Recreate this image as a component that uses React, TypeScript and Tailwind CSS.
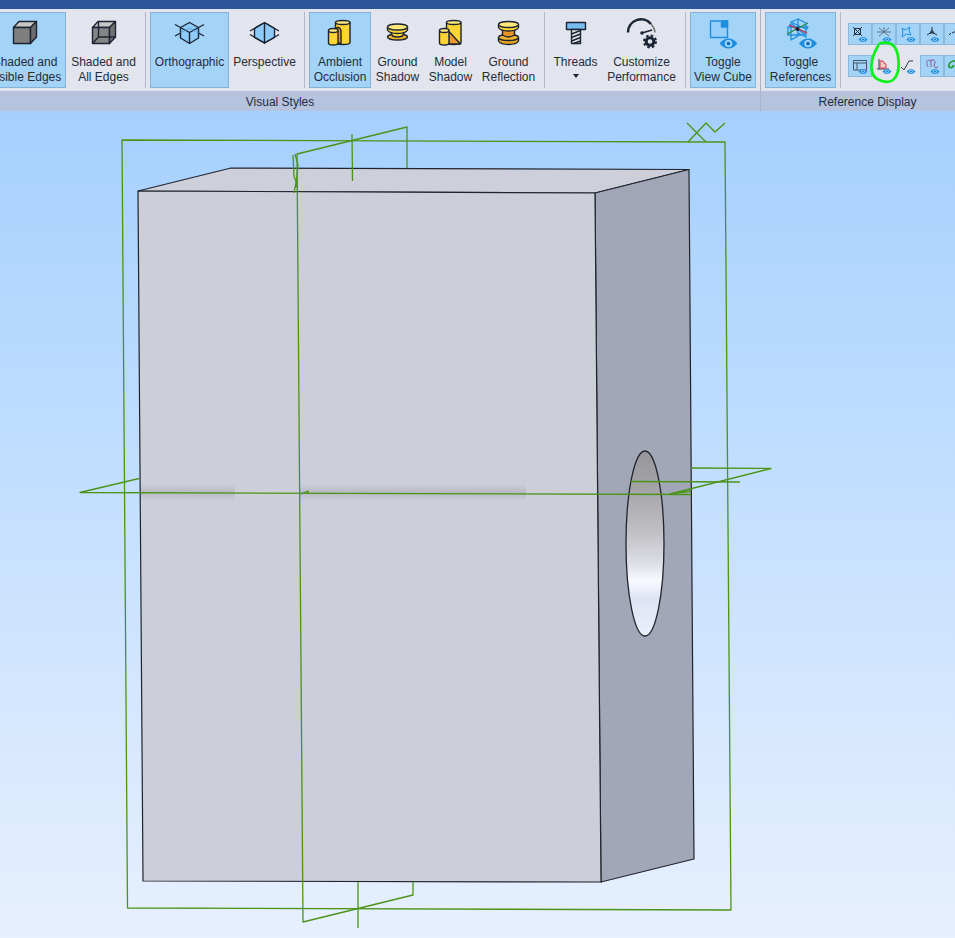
import { ReactNode } from "react";
import clsx from "clsx";

const INK = "#1b2433";
const BLUE = "#1e8fe0";
const GREEN = "#4b9418";

function Icon({ children }: { children: ReactNode }) {
  return (
    <svg viewBox="0 0 36 32" className="h-8 w-9 shrink-0" fill="none" stroke={INK} strokeWidth="1.4" strokeLinejoin="round" aria-hidden="true">
      {children}
    </svg>
  );
}

function Eye({ x, y, s = 1 }: { x: number; y: number; s?: number }) {
  return (
    <g transform={`translate(${x} ${y}) scale(${s})`} stroke="none">
      <path d="M-9 0Q-5 -5 0 -5T9 0Q5 5 0 5T-9 0Z" fill={BLUE} />
      <circle r="3.6" fill="#b5defb" />
      <circle r="2" fill="#1574c4" />
    </g>
  );
}

const ShadedIcon = () => (
  <Icon>
    <path d="M6.5 10.5L12 4.5H29.5L23.5 10.5Z" fill="#c8c8c8" />
    <path d="M6.5 10.5H23.5V26.5H6.5Z" fill="#7f7f7f" />
    <path d="M23.5 10.5L29.5 4.5V20L23.5 26.5Z" fill="#6c6c6c" />
  </Icon>
);

const AllEdgesIcon = () => (
  <Icon>
    <path d="M6.5 10.5L12 4.5H29.5L23.5 10.5Z" fill="#c8c8c8" />
    <path d="M6.5 10.5H23.5V26.5H6.5Z" fill="#858585" />
    <path d="M23.5 10.5L29.5 4.5V20L23.5 26.5Z" fill="#707070" />
    <path d="M12.5 4.5V20H29.5M12.5 20L6.5 26.5" />
  </Icon>
);

const OrthoIcon = () => (
  <Icon>
    <path d="M17.5 5.5L26.5 10.5V21L17.5 26.5L8.500 21V10.5Z" fill="#8ccbfa" />
    <path d="M3 7.5L17.5 15.5L32 7.5M17.5 15.5V26.5M8.500 16L3 19M26.5 16L32 19" />
    <path d="M8.500 16L17.5 11L26.5 16" stroke="#5d9fd0" strokeWidth="0.8" />
  </Icon>
);

const PerspectiveIcon = () => (
  <Icon>
    <path d="M17.5 5.5L27.5 11.5V20.5L17.5 26L7.5 20.5V11.5Z" fill="#8ccbfa" />
    <path d="M17.5 5V27M17.5 5.5L3 14M17.5 5.5L32 14M3 17.5L17.5 26M32 17.5L17.5 26" />
  </Icon>
);

function Cylinder({ x, y, w, h }: { x: number; y: number; w: number; h: number }) {
  const r = w / 2;
  return (
    <g>
      <path d={`M${x} ${y}V${y + h}A${r} 2 0 0 0 ${x + w} ${y + h}V${y}`} fill="#fcd535" />
      <ellipse cx={x + r} cy={y} rx={r} ry="2" fill="#ffe77a" />
    </g>
  );
}

const AmbientIcon = () => (
  <Icon>
    <Cylinder x={13.5} y={5.5} w={14.5} h={20} />
    <path d="M14 11C17.500 9.500 19 12 19 14V26.500L14 26Z" fill="#e89b1c" />
    <Cylinder x={6.5} y={13.5} w={9.5} h={12.5} />
  </Icon>
);

const GroundShadowIcon = () => (
  <Icon>
    <ellipse cx="17.5" cy="20" rx="10" ry="3" fill="#f0b429" />
    <path d="M10.5 14L12.5 19Q17.5 21 22.5 19L24.5 14Z" fill="#fcd535" />
    <path d="M7.5 10V13Q9.5 16.5 17.5 16.5T27.5 13V10" fill="#fcd535" />
    <ellipse cx="17.5" cy="10" rx="10" ry="3" fill="#ffe77a" />
  </Icon>
);

const ModelShadowIcon = () => (
  <Icon>
    <Cylinder x={13.5} y={5.5} w={14.5} h={20} />
    <path d="M15.5 14L27.5 27H15.5Z" fill="#f0962a" />
    <Cylinder x={6.5} y={13.5} w={9.5} h={12.5} />
  </Icon>
);

const ReflectionIcon = () => (
  <Icon>
    <path d="M7.5 20.5V24Q9.5 27.5 17.5 27.5T27.5 24V20.5" fill="#e9a51f" />
    <ellipse cx="17.5" cy="20.5" rx="10" ry="3" fill="#f3b62b" />
    <path d="M11.5 12V18Q17.5 22 23.5 18V12Z" fill="#e79422" />
    <path d="M7.5 7.5V10.5Q9.5 14 17.5 14T27.5 10.5V7.5" fill="#fcd535" />
    <ellipse cx="17.5" cy="7.5" rx="10" ry="3" fill="#ffe77a" />
  </Icon>
);

const ThreadsIcon = () => (
  <Icon>
    <path d="M8.5 5.500H27.5V12.5H8.5Z" fill="#79bdf0" />
    <path d="M13.5 12.5H22.5V26.5H13.5Z" fill="#e6e6e6" />
    <path d="M13.5 17L22.5 13.5M13.5 20.5L22.5 17M13.5 24L22.5 20.5M15.5 26.5L22.5 24" />
  </Icon>
);

const PerformanceIcon = () => (
  <Icon>
    <path d="M4 15.5A13 13 0 0 1 27 7" strokeWidth="2.6" />
    <path d="M27 7Q30.5 10.500 31 15.5" strokeWidth="1.6" stroke="#777" />
    <path d="M18 16L28 13" strokeWidth="1.8" />
    <circle cx="18" cy="16" r="1.8" fill={INK} stroke="none" />
    <circle cx="26" cy="24.5" r="3.8" strokeWidth="3" />
    <circle cx="26" cy="24.5" r="6" strokeWidth="2" strokeDasharray="2.5 2.21" />
  </Icon>
);

const ViewCubeIcon = () => (
  <Icon>
    <path d="M5.5 4H22.5V20.5H5.5Z" fill="#98cffa" stroke={BLUE} />
    <path d="M16.5 4H22.5V10H16.5Z" fill={BLUE} stroke={BLUE} />
    <Eye x={23.5} y={26.5} />
  </Icon>
);

const ReferencesIcon = () => (
  <Icon>
    <g stroke={BLUE} strokeWidth="1.3">
      <path d="M8 5L15 2V19L8 23Z" />
      <path d="M15 2L23 6V20L15 16M5 10H25L20 18H5ZM9 7L22 18M8 5L23 12" />
    </g>
    <path d="M4 17L25 6" stroke="#2c8a3c" />
    <path d="M6 8L24 16" stroke="#a8465f" />
    <circle cx="14.5" cy="12" r="2" fill={INK} stroke="none" />
    <Eye x={25} y={26.5} />
  </Icon>
);

type RibbonButtonProps = {
  icon: ReactNode;
  lines: string[];
  width: string;
  active?: boolean;
  menu?: boolean;
};

function RibbonButton({ icon, lines, width, active, menu }: RibbonButtonProps) {
  return (
    <button
      type="button"
      aria-pressed={active}
      className={clsx(
        "flex h-[76px] shrink-0 flex-col items-center border pt-1 text-xs leading-[15px] whitespace-nowrap",
        width,
        active ? "border-[#83b4d8] bg-[#a3d4f8]" : "border-transparent hover:bg-[#d0e4f7]"
      )}
    >
      {icon}
      <span className="mt-[6px] flex flex-col items-center">
        {lines.map((line) => (
          <span key={line}>{line}</span>
        ))}
      </span>
      {menu && (
        <svg viewBox="0 0 8 5" className="mt-1 h-[5px] w-2" aria-hidden="true">
          <path d="M1 0H7L4 4Z" fill={INK} />
        </svg>
      )}
    </button>
  );
}

const Separator = () => <div className="mx-1 h-[76px] w-px shrink-0 bg-[#b3b8c8]" />;

const smallTools = [
  {
    name: "Points",
    active: true,
    art: <path d="M5 4L14 13M14 4L5 13M6.5 5.5H12.5V11.5H6.5Z" stroke="#2a3444" />,
  },
  {
    name: "Axes",
    active: true,
    art: <path d="M7 5L17 13M17 5L7 13M12 4V9M5 9H19" stroke="#506070" strokeWidth="0.8" />,
  },
  {
    name: "Planes",
    active: true,
    art: <path d="M6 5L9 7L14 4L13 8L15 12L10 11L6 14L7 9Z" stroke={BLUE} />,
  },
  {
    name: "Origin",
    active: true,
    art: <path d="M12 4V9L7 12M12 9L17 12M10 10L12 7L14 10Z" stroke="#223040" />,
  },
  {
    name: "Curves",
    active: true,
    art: <path d="M5 12L7 10M8 10L10 9L13 9" stroke="#223040" />,
  },
  {
    name: "Annotations",
    active: true,
    art: <path d="M5.5 5.5H18.5V15H5.5ZM5.5 8H18M9 8V15" stroke="#41566b" />,
  },
  {
    name: "Sketch dimensions",
    active: false,
    art: (
      <>
        <path d="M7 4V14H17M5 14H7" stroke="#333a48" />
        <path d="M8 6H11L12 8L14 9V13H8Z" stroke="#d33b52" fill="#f3c9c4" />
      </>
    ),
  },
  {
    name: "Surface finish",
    active: false,
    art: <path d="M5 12L8 15L13 6H17" stroke="#333a48" />,
  },
  {
    name: "Sketch curves",
    active: true,
    art: <path d="M11 6C6 3 6 9 8 12M11 12V5Q15 4 15 8L14 11Q15 14 18 12" stroke="#94549c" />,
  },
  {
    name: "Loops",
    active: true,
    art: <path d="M13 6C8 5 4 8 5 12Q8 14 10 10" stroke="#259c39" strokeWidth="1.8" />,
  },
];

function SmallTools() {
  return (
    <div className="relative ml-[3px] grid shrink-0 grid-cols-5 content-start gap-y-[10px] pt-[11px]">
      {smallTools.map((tool) => (
        <button
          key={tool.name}
          type="button"
          aria-label={tool.name}
          className={clsx(
            "h-[22px] w-6 border",
            tool.active ? "border-[#8cb8d9] bg-[#a3d4f8]" : "border-transparent"
          )}
        >
          <svg viewBox="1 1 22 20" className="h-5 w-[22px]" fill="none">
            {tool.art}
            <Eye x={15} y={16.5} s={0.5} />
          </svg>
        </button>
      ))}
      {/* hand drawn marker round the sketch dimensions button */}
      <svg viewBox="0 0 32 44" className="pointer-events-none absolute top-[29px] left-[21px] h-11 w-8" fill="none" aria-hidden="true">
        <path
          d="M9 5C6 10 3 16 2.5 24C2 32 5 37 10 39C15 41 20 42 24 39C29 35 30 27 29.5 20C29 12 27 6 23 3.5C19 1 13 1 10 3"
          stroke="#0df01c"
          strokeWidth="2.7"
          strokeLinecap="round"
        />
      </svg>
    </div>
  );
}

function GroupLabel({ children }: { children: ReactNode }) {
  return <div className="h-5 bg-[#b5c3de] text-center text-xs leading-[23px]">{children}</div>;
}

function Ribbon() {
  return (
    <header className="flex overflow-hidden bg-[#e2e5ee] text-[#252b3a]">
      {/* the left end of this group is scrolled out of view */}
      <section className="-ml-[200px] w-[960px] shrink-0">
        <div className="flex h-[82px] justify-end pt-[3px] pr-1">
          <RibbonButton icon={<ShadedIcon />} lines={["Shaded and", "Visible Edges"]} width="w-[82px]" active />
          <RibbonButton icon={<AllEdgesIcon />} lines={["Shaded and", "All Edges"]} width="w-[75px]" />
          <Separator />
          <RibbonButton icon={<OrthoIcon />} lines={["Orthographic"]} width="w-[79px]" active />
          <RibbonButton icon={<PerspectiveIcon />} lines={["Perspective"]} width="w-[71px]" />
          <Separator />
          <RibbonButton icon={<AmbientIcon />} lines={["Ambient", "Occlusion"]} width="w-[62px]" active />
          <RibbonButton icon={<GroundShadowIcon />} lines={["Ground", "Shadow"]} width="w-[53px]" />
          <RibbonButton icon={<ModelShadowIcon />} lines={["Model", "Shadow"]} width="w-[53px]" />
          <RibbonButton icon={<ReflectionIcon />} lines={["Ground", "Reflection"]} width="w-[63px]" />
          <Separator />
          <RibbonButton icon={<ThreadsIcon />} lines={["Threads"]} width="w-[53px]" menu />
          <RibbonButton icon={<PerformanceIcon />} lines={["Customize", "Performance"]} width="w-[79px]" />
          <Separator />
          <RibbonButton icon={<ViewCubeIcon />} lines={["Toggle", "View Cube"]} width="w-[66px]" active />
        </div>
        <GroupLabel>Visual Styles</GroupLabel>
      </section>
      <section className="min-w-[214px] shrink-0 border-l border-[#a9b2c8]">
        <div className="flex h-[82px] pt-[3px] pl-1">
          <RibbonButton icon={<ReferencesIcon />} lines={["Toggle", "References"]} width="w-[71px]" active />
          <Separator />
          <SmallTools />
        </div>
        <GroupLabel>Reference Display</GroupLabel>
      </section>
      <div className="flex flex-1 flex-col justify-end">
        <GroupLabel>{null}</GroupLabel>
      </div>
    </header>
  );
}

function Viewport() {
  return (
    <main className="bg-linear-to-b from-[#a5d0fe] to-[#e7f0fe]">
      <svg viewBox="0 111 955 827" className="block w-full" fill="none" strokeLinejoin="round" role="img" aria-label="Block with a through hole">
        <defs>
          <linearGradient id="bore" x1="0" y1="0" x2="0" y2="1">
            <stop offset="0" stopColor="#97979b" />
            <stop offset="0.2" stopColor="#a4a4a7" />
            <stop offset="0.45" stopColor="#c2c2c7" />
            <stop offset="0.6" stopColor="#dcdde4" />
            <stop offset="0.7" stopColor="#f8faff" />
            <stop offset="0.8" stopColor="#dfe4f4" />
            <stop offset="1" stopColor="#eceffb" />
          </linearGradient>
          <linearGradient id="crease" x1="0" y1="0" x2="0" y2="1">
            <stop offset="0" stopColor="#999ca3" stopOpacity="0" />
            <stop offset="0.5" stopColor="#999ca3" stopOpacity="0.4" />
            <stop offset="1" stopColor="#999ca3" stopOpacity="0" />
          </linearGradient>
        </defs>

        {/* solid body */}
        <g stroke="#20242d" strokeWidth="1.2">
          <path d="M138 191L231 168L689 169.5L595 193Z" fill="#cdcfdb" />
          <path d="M595 193L689 169.5L694 859L601 882Z" fill="#a1a7b6" />
          <path d="M138 191L595 193L601 882L143 881Z" fill="#cccfd8" />
        </g>
        <path d="M141 484H235V501H141ZM300 484H526V501H300Z" fill="url(#crease)" />
        <ellipse cx="645" cy="543.5" rx="19" ry="92.5" fill="url(#bore)" stroke="#20242d" strokeWidth="1.3" />

        {/* reference planes and axes */}
        <g stroke={GREEN} strokeWidth="1.3">
          <path d="M122 140L725 142L731 910L127.5 908Z" />
          <path d="M407 168V127L297 154L303 922L413 895V882" />
          <path d="M352 134L352.5 181M358 882V928" />
          <path d="M293 155L294 176L296 182L294 193M295 154L298 165L296 188" />
          <path d="M139 478.5L80 492.5L691 494.5" />
          <path d="M691 468L771 468.5L670 494L691 491" />
          <path d="M631 481.5L740 482" />
          <path d="M301 494L308 491V494" />
          <path d="M687 123L706 142M688 142L706 123L715 132L725 123" />
        </g>
      </svg>
    </main>
  );
}

export default function App() {
  return (
    <div className="min-h-screen bg-[#e7f0fe] font-['Liberation_Sans',Arial,sans-serif]">
      <div className="h-[9px] bg-[#2b579a]" />
      <Ribbon />
      <Viewport />
    </div>
  );
}
